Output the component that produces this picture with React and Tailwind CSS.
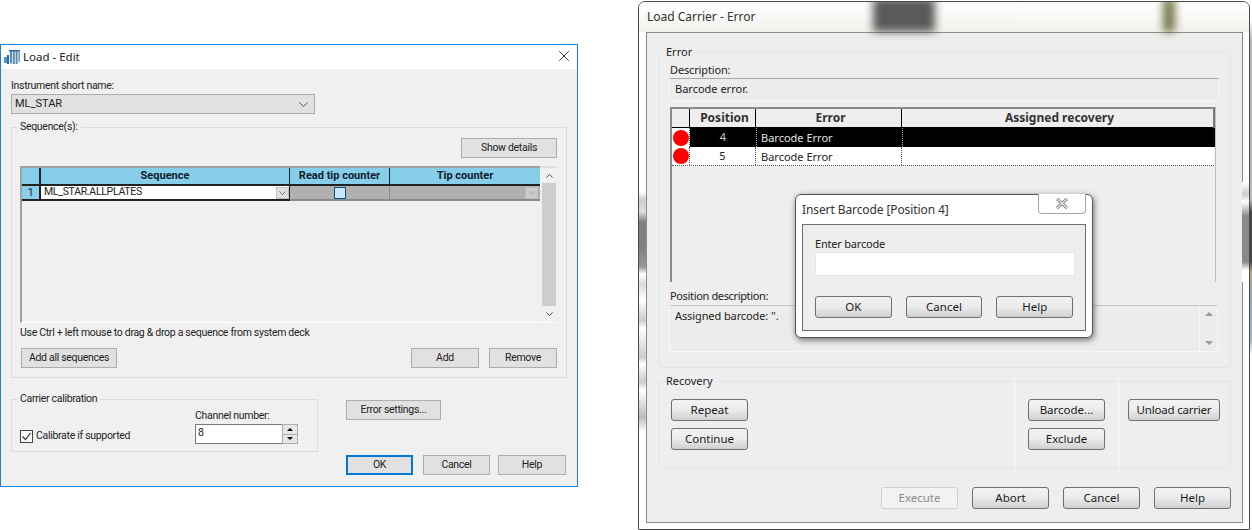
import { X } from "lucide-react";

const Chevron = ({ className = "w-[9px] h-[5px]", stroke = "#555" }) => (
  <svg viewBox="0 0 9 5" className={className}>
    <path d="M0.5 0.5 L4.5 4.5 L8.5 0.5" fill="none" stroke={stroke} strokeWidth="1" />
  </svg>
);

const LoadIcon = () => (
  <svg viewBox="0 0 16 16" className="w-[16px] h-[16px]">
    <path d="M0 8h3v6H0z" fill="#4a97d8" />
    <path d="M3 6h2v9H3z" fill="#1f6fb5" />
    <path d="M6 2h2v12.500H6zM8.800 2h2v13H8.800zM11.600 2h2v13h-2z" fill="#5b8cb8" />
    <path d="M5 1h11v1.500H5z" fill="#2b6aa3" />
    <path d="M14.300 2H16v11h-1.700z" fill="#7fa6c8" />
  </svg>
);

// flat win10 button for the left dialog
const FlatBtn = ({ children, className = "" }) => (
  <button className={`h-[20px] bg-[#e1e1e1] border border-[#adadad] text-[10.500px] tracking-[-0.3px] leading-none text-[#222] ${className}`}>
    {children}
  </button>
);

// win7 gradient button for the right dialog
const GlassBtn = ({ children, className = "", disabled }) => (
  <button
    className={`h-[22px] w-[77px] rounded-[3px] border text-[11.500px] leading-none ${
      disabled
        ? "border-[#d0d0d0] bg-[#f2f2f2] text-[#8a8a8a]"
        : "border-[#707070] bg-gradient-to-b from-[#f2f2f2] via-[#ebebeb] to-[#d0d0d0] text-[#1a1a1a]"
    } ${className}`}
  >
    {children}
  </button>
);

function LoadEdit() {
  return (
    <div className="absolute left-0 top-[44px] w-[578px] h-[443px] border border-[#1883d7] bg-[#f0f0f0] flex flex-col font-['Roboto',sans-serif] text-[#222] text-[10.500px] tracking-[-0.3px]">
      <div className="h-[24px] bg-white flex items-center pl-[3px] pr-[4px] shrink-0">
        <LoadIcon />
        <span className="ml-[3px] -mt-[1px] text-[11.500px] tracking-normal font-['Noto_Sans',sans-serif] text-[#222]">Load - Edit</span>
        <X className="ml-auto -mt-[2px] w-[18px] h-[18px] text-[#222]" strokeWidth={1.2} />
      </div>

      <div className="flex-1 px-[10px] flex flex-col">
        <div className="mt-[10px] h-[13px] leading-[14px]">Instrument short name:</div>
        <div className="mt-[2px] w-[304px] h-[20px] bg-[#e1e1e1] border border-[#adadad] flex items-center px-[3px]">
          <span className="tracking-normal text-[11px] mt-[1px]">ML_STAR</span>
          <span className="ml-auto mr-[3px]">
            <Chevron />
          </span>
        </div>

        <fieldset className="mt-[6px] w-[556px] h-[258px] border border-[#dcdcdc] px-[8px]">
          <legend className="-ml-[3px] px-[3px] leading-[14px]">Sequence(s):</legend>
          <div className="mt-[4px] flex justify-end pr-[1px]">
            <FlatBtn className="w-[96px]">Show details</FlatBtn>
          </div>

          <div className="mt-[8px] flex h-[157px]">
            <div className="w-[520px] border-t-2 border-l-2 border-b border-[#a0a0a0] border-b-white">
              <div className="flex h-[18px] font-bold text-[11px] tracking-normal text-[#10202c]">
                <div className="w-[19px] bg-[#87ceeb] border-r-2 border-b-2 border-[#222]" />
                <div className="w-[249px] bg-[#87ceeb] border-r border-b-2 border-[#222] flex items-center justify-center">Sequence</div>
                <div className="w-[100px] bg-[#87ceeb] border-r border-b-2 border-[#222] flex items-center justify-center">Read tip counter</div>
                <div className="flex-1 bg-[#87ceeb] border-b-2 border-[#222] flex items-center justify-center">Tip counter</div>
              </div>
              <div className="flex h-[15px]">
                <div className="w-[19px] bg-[#87ceeb] border-r-2 border-b-2 border-[#222] flex items-center justify-center">1</div>
                <div className="w-[249px] bg-white border-r border-b-2 border-[#222] flex items-center pl-[3px]">
                  <span className="leading-none">ML_STAR.ALLPLATES</span>
                  <span className="ml-auto w-[13px] h-[12px] bg-[#e1e1e1] border border-[#c0c0c0] flex items-center justify-center">
                    <Chevron className="w-[7px] h-[4px]" />
                  </span>
                </div>
                <div className="w-[100px] bg-[#b0b0b0] border-r border-b-2 border-[#8a8a8a] flex items-center justify-center">
                  <span className="w-[12px] h-[12px] bg-[#cce4f7] border border-[#005499]" />
                </div>
                <div className="flex-1 bg-[#b0b0b0] border-b-2 border-[#8a8a8a] flex items-center justify-end pr-[2px]">
                  <span className="w-[13px] h-[12px] bg-[#cccccc] border border-[#bfbfbf] flex items-center justify-center">
                    <Chevron className="w-[7px] h-[4px]" stroke="#a0a0a0" />
                  </span>
                </div>
              </div>
            </div>

            <div className="ml-[1px] w-[16px] border-t-2 border-b border-[#e0e0e0] border-b-white flex flex-col items-center">
              <div className="h-[15px] flex items-center">
                <Chevron className="w-[7px] h-[4px] rotate-180" stroke="#222" />
              </div>
              <div className="w-[14px] h-[123px] bg-[#cdcdcd]" />
              <div className="flex-1 flex items-center">
                <Chevron className="w-[7px] h-[4px]" stroke="#222" />
              </div>
            </div>
          </div>

          <div className="mt-[3px] h-[14px] leading-[14px]">
            Use Ctrl + left mouse to drag &amp; drop a sequence from system deck
          </div>
          <div className="mt-[8px] flex pl-[1px] pr-[1px]">
            <FlatBtn className="w-[96px]">Add all sequences</FlatBtn>
            <FlatBtn className="ml-auto w-[68px]">Add</FlatBtn>
            <FlatBtn className="ml-[10px] w-[68px]">Remove</FlatBtn>
          </div>
        </fieldset>

        <div className="mt-[14px] flex items-start">
          <fieldset className="w-[307px] h-[60px] border border-[#dcdcdc] px-[8px]">
            <legend className="-ml-[3px] px-[3px] leading-[14px]">Carrier calibration</legend>
            <div className="flex items-end h-[38px]">
              <div className="flex items-center">
                <span className="w-[13px] h-[13px] bg-[#f8f8f8] border border-[#444] flex items-center justify-center">
                  <svg viewBox="0 0 11 11" className="w-[11px] h-[11px]">
                    <path d="M1.5 5.5 L4.5 8.5 L9.5 2" fill="none" stroke="#333" strokeWidth="1.2" />
                  </svg>
                </span>
                <span className="ml-[3px]">Calibrate if supported</span>
              </div>
              <div className="ml-auto mr-[11px] flex flex-col">
                <span className="leading-[13px] mb-[2px]">Channel number:</span>
                <div className="flex h-[20px] w-[103px]">
                  <div className="flex-1 bg-white border-t border-l border-b border-[#7a7a7a] pl-[2px] leading-[16px]">8</div>
                  <div className="w-[16px] border border-[#adadad] flex flex-col">
                    <div className="flex-1 bg-[#e6e6e6] border-b border-[#adadad] flex items-center justify-center">
                      <span className="border-x-[3px] border-x-transparent border-b-[3px] border-b-black" />
                    </div>
                    <div className="flex-1 bg-[#e6e6e6] flex items-center justify-center">
                      <span className="border-x-[3px] border-x-transparent border-t-[3px] border-t-black" />
                    </div>
                  </div>
                </div>
              </div>
            </div>
          </fieldset>
          <FlatBtn className="ml-[28px] mt-[8px] w-[95px]">Error settings...</FlatBtn>
        </div>

        <div className="mt-[3px] flex pl-[335px]">
          <FlatBtn className="w-[67px] !border-2 !border-[#0078d7]">OK</FlatBtn>
          <FlatBtn className="ml-[10px] w-[67px]">Cancel</FlatBtn>
          <FlatBtn className="ml-[8px] w-[68px]">Help</FlatBtn>
        </div>
      </div>
    </div>
  );
}

function InsertBarcode() {
  return (
    <div className="absolute left-[795px] top-[194px] w-[298px] h-[144px] rounded-[6px] border border-[#555] bg-white shadow-[1px_2px_6px_rgba(0,0,0,0.55)] flex flex-col px-[6px] pb-[6px] font-['Noto_Sans',sans-serif] text-[11px]">
      <div className="h-[29px] shrink-0 flex items-start">
        <span className="mt-[6px] text-[12px] text-[#333] tracking-[-0.1px]">Insert Barcode [Position 4]</span>
        <div className="ml-auto w-[48px] h-[20px] -mt-[1px] border border-t-0 border-[#a8a8a8] rounded-b-[4px] bg-white flex items-center justify-center">
          <svg viewBox="0 0 14 11" className="w-[14px] h-[11px]">
            <path d="M2 1 L12 10 M12 1 L2 10" stroke="#6a7078" strokeWidth="3" />
            <path d="M2 1 L12 10 M12 1 L2 10" stroke="#f2f2f2" strokeWidth="1.2" />
          </svg>
        </div>
      </div>
      <div className="flex-1 border border-[#6e6e6e] bg-[#eeeeee] px-[12px] flex flex-col">
        <div className="mt-[11px] h-[16px] leading-[16px] tracking-[-0.2px] text-[#222]">Enter barcode</div>
        <div className="h-[24px] w-[260px] bg-white border border-[#e4e4ea]" />
        <div className="mt-[20px] flex gap-[14px]">
          <GlassBtn>OK</GlassBtn>
          <GlassBtn>Cancel</GlassBtn>
          <GlassBtn>Help</GlassBtn>
        </div>
      </div>
    </div>
  );
}

function LoadCarrierError() {
  return (
    <div className="absolute left-[638px] top-[1px] w-[612px] h-[529px] rounded-t-[7px] border border-[#4a4a4a] bg-white flex flex-col font-['Noto_Sans',sans-serif] text-[#222] text-[11px] overflow-hidden">
      <div className="relative h-[30px] shrink-0 bg-gradient-to-b from-white to-[#f1f1ec]">
        <span className="absolute left-[8px] top-[6px] text-[12px] text-[#333]">Load Carrier - Error</span>
        <div className="absolute left-[234px] -top-[4px] w-[62px] h-[34px] bg-[#5a5a5a] blur-[4px]" />
        <div className="absolute left-[524px] -top-[4px] w-[12px] h-[34px] bg-[#77774a] blur-[4px]" />
      </div>

      {/* blurred desktop showing through the glass frame */}
      <div className="absolute left-0 top-[190px] w-[7px] h-[250px] bg-[linear-gradient(to_bottom,#fff_0,#ccc_8px,#ddd_20px,#808080_30px,#808080_55px,#999_75px,#fff_82px,#d8dde0_92px,#fff_108px,#ccc_128px,#fff_136px,#ccc_165px,#fff_172px,#ccc_190px,#fff_198px,#bbb_225px,#fff_240px)]" />
      <div className="absolute right-0 top-[180px] w-[7px] h-[100px] bg-[linear-gradient(to_bottom,#fff_0,#ccc_12px,#fff_20px,#8a8a8a_34px,#8a8a8a_80px,#fff_88px)]" />

      <div className="ml-[7px] w-[597px] h-[491px] border border-[#8a8a8a] bg-[#eeeeee] px-[12px] flex flex-col">
        <fieldset className="mt-[11px] w-[572px] h-[324px] border border-[#dde4ea] rounded-[3px] px-[10px]">
          <legend className="-ml-[6px] px-[2px] leading-[16px]">Error</legend>
          <div className="mt-[2px] leading-[16px] tracking-[-0.15px]">Description:</div>
          <div className="h-[23px] w-[550px] -ml-[1px] border border-[#f8f8f8] border-t-[#a8a8a8] bg-[#ececec] pl-[5px] leading-[19px]">Barcode error.</div>

          <div className="mt-[6px] h-[175px] w-[546px] border-t-2 border-l-2 border-r border-[#8a8a8a] border-r-[#c0c0c0] bg-[#eeeeee]">
            <div className="flex h-[19px] text-[12px] font-bold text-[#333] border-r-2 border-[#777]">
              <div className="w-[18px] border-r border-b border-black" />
              <div className="w-[66px] pl-[4px] border-r border-b border-black flex items-center justify-center">Position</div>
              <div className="w-[146px] pl-[4px] border-r border-b border-black flex items-center justify-center">Error</div>
              <div className="flex-1 pl-[4px] border-b border-black flex items-center justify-center">Assigned recovery</div>
            </div>
            <div className="flex h-[19px] text-white">
              <div className="w-[18px] bg-white border-r border-dotted border-[#555] flex items-center justify-center">
                <span className="w-[16px] h-[16px] rounded-full bg-[#ff0000]" />
              </div>
              <div className="w-[66px] bg-black flex items-center justify-center text-[#ccc]">4</div>
              <div className="w-[146px] bg-black border-l border-dotted border-[#aaa] pl-[4px] text-[#e0e0e0] leading-[19px]">Barcode Error</div>
              <div className="flex-1 bg-black border-l border-dotted border-[#aaa]" />
            </div>
            <div className="flex h-[19px] bg-white border-b border-dotted border-[#555] mr-[1px]">
              <div className="w-[18px] border-r border-dotted border-[#555] flex items-center justify-center">
                <span className="w-[16px] h-[16px] rounded-full bg-[#ff0000]" />
              </div>
              <div className="w-[66px] border-r border-dotted border-[#555] flex items-center justify-center">5</div>
              <div className="w-[146px] border-r border-dotted border-[#555] pl-[5px] leading-[19px]">Barcode Error</div>
              <div className="flex-1" />
            </div>
          </div>

          <div className="mt-[6px] leading-[16px] tracking-[-0.35px]">Position description:</div>
          <div className="mt-[1px] h-[47px] w-[549px] -ml-[1px] border border-[#f8f8f8] border-t-[#c8c8c8] bg-[#ececec] pl-[5px] flex">
            <span className="leading-[19px] tracking-[-0.1px]">Assigned barcode: ''.</span>
            <div className="ml-auto w-[18px] flex flex-col items-center justify-between py-[6px] border-l border-[#f6f6f6]">
              <span className="border-x-[4px] border-x-transparent border-b-[4px] border-b-[#9a9a9a]" />
              <span className="border-x-[4px] border-x-transparent border-t-[4px] border-t-[#9a9a9a]" />
            </div>
          </div>
        </fieldset>

        <fieldset className="mt-[5px] w-[572px] h-[95px] border border-[#dde4ea] rounded-[3px] flex">
          <legend className="ml-[5px] px-[1px] leading-[16px]">Recovery</legend>
          <div className="flex h-full">
            <div className="w-[354px] pl-[11px] pt-[10px] flex flex-col gap-[7px]">
              <GlassBtn>Repeat</GlassBtn>
              <GlassBtn>Continue</GlassBtn>
            </div>
            <div className="w-[105px] h-[94px] -mt-[8px] border-l border-r border-[#fafafa] pl-[13px] pt-[18px] flex flex-col gap-[7px]">
              <GlassBtn>Barcode...</GlassBtn>
              <GlassBtn>Exclude</GlassBtn>
            </div>
            <div className="pl-[9px] pt-[10px]">
              <GlassBtn className="!w-[92px] tracking-[-0.2px]">Unload carrier</GlassBtn>
            </div>
          </div>
        </fieldset>

        <div className="mt-[19px] flex justify-end gap-[14px] w-[572px]">
          <GlassBtn disabled>Execute</GlassBtn>
          <GlassBtn>Abort</GlassBtn>
          <GlassBtn>Cancel</GlassBtn>
          <GlassBtn>Help</GlassBtn>
        </div>
      </div>
    </div>
  );
}

export default function App() {
  return (
    <div className="relative w-[1252px] h-[530px] bg-white overflow-hidden">
      <LoadEdit />
      <LoadCarrierError />
      <div className="absolute left-[1250px] top-0 w-[2px] h-[360px] bg-[linear-gradient(to_bottom,#fff_0,#fff_20px,#b8b8b8_40px,#b8b8b8_200px,#444_212px,#444_262px,#b0a890_272px,#9aa8b4_300px,#a8b4c0_340px,#fff_355px)]" />
      <InsertBarcode />
    </div>
  );
}
